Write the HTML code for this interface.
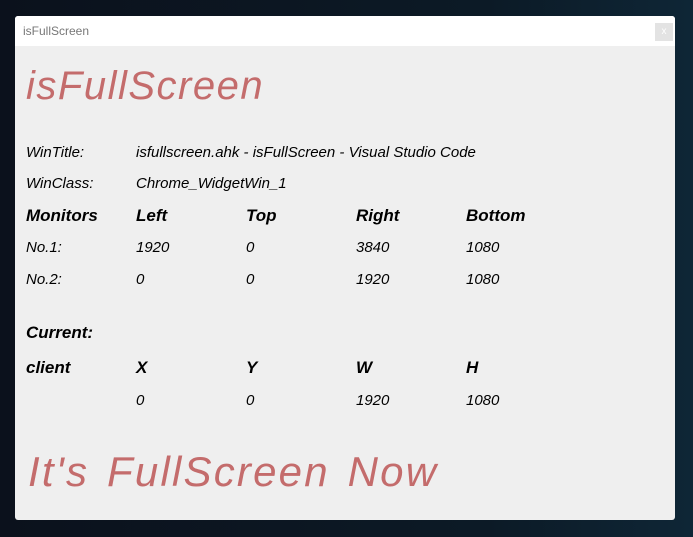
<!DOCTYPE html>
<html><head><style>
body{margin:0;width:693px;height:537px;background:linear-gradient(90deg,#0b111c 0%,#0c1a26 70%,#0e2636 100%);position:relative;overflow:hidden;font-family:"Liberation Sans",sans-serif}
.win{position:absolute;left:15px;top:16px;width:660px;height:504px;background:#efefef;border-radius:3px;overflow:hidden}
.tb{height:30px;background:#fff;position:relative}
.tb span{position:absolute;left:8px;top:8px;font-size:12px;color:#777}
.x{position:absolute;right:2px;top:7px;width:18px;height:18px;background:#e3e3e3;color:#fff;font-size:10px;text-align:center;line-height:18px}
.t{position:absolute;font-style:italic;color:#000;font-size:15px;white-space:nowrap}
.b{font-weight:bold;font-size:17px}
.r{color:#c46c6c;font-style:italic;position:absolute;white-space:nowrap}
</style></head><body>
<div class="win">
<div class="tb"><span>isFullScreen</span><div class="x">x</div></div>
</div>
<div class="r" style="left:26px;top:64px;font-size:40px;letter-spacing:1.5px">isFullScreen</div>
<div class="t" style="left:26px;top:144px">WinTitle:</div>
<div class="t" style="left:136px;top:144px">isfullscreen.ahk - isFullScreen - Visual Studio Code</div>
<div class="t" style="left:26px;top:175px">WinClass:</div>
<div class="t" style="left:136px;top:175px">Chrome_WidgetWin_1</div>
<div class="t b" style="left:26px;top:206px">Monitors</div>
<div class="t b" style="left:136px;top:206px">Left</div>
<div class="t b" style="left:246px;top:206px">Top</div>
<div class="t b" style="left:356px;top:206px">Right</div>
<div class="t b" style="left:466px;top:206px">Bottom</div>
<div class="t" style="left:26px;top:239px">No.1:</div>
<div class="t" style="left:136px;top:239px">1920</div>
<div class="t" style="left:246px;top:239px">0</div>
<div class="t" style="left:356px;top:239px">3840</div>
<div class="t" style="left:466px;top:239px">1080</div>
<div class="t" style="left:26px;top:271px">No.2:</div>
<div class="t" style="left:136px;top:271px">0</div>
<div class="t" style="left:246px;top:271px">0</div>
<div class="t" style="left:356px;top:271px">1920</div>
<div class="t" style="left:466px;top:271px">1080</div>
<div class="t b" style="left:26px;top:323px">Current:</div>
<div class="t b" style="left:26px;top:358px">client</div>
<div class="t b" style="left:136px;top:358px">X</div>
<div class="t b" style="left:246px;top:358px">Y</div>
<div class="t b" style="left:356px;top:358px">W</div>
<div class="t b" style="left:466px;top:358px">H</div>
<div class="t" style="left:136px;top:392px">0</div>
<div class="t" style="left:246px;top:392px">0</div>
<div class="t" style="left:356px;top:392px">1920</div>
<div class="t" style="left:466px;top:392px">1080</div>
<div class="r" style="left:28px;top:448px;font-size:42px;letter-spacing:2.2px;word-spacing:4px">It's FullScreen Now</div>
</body></html>
